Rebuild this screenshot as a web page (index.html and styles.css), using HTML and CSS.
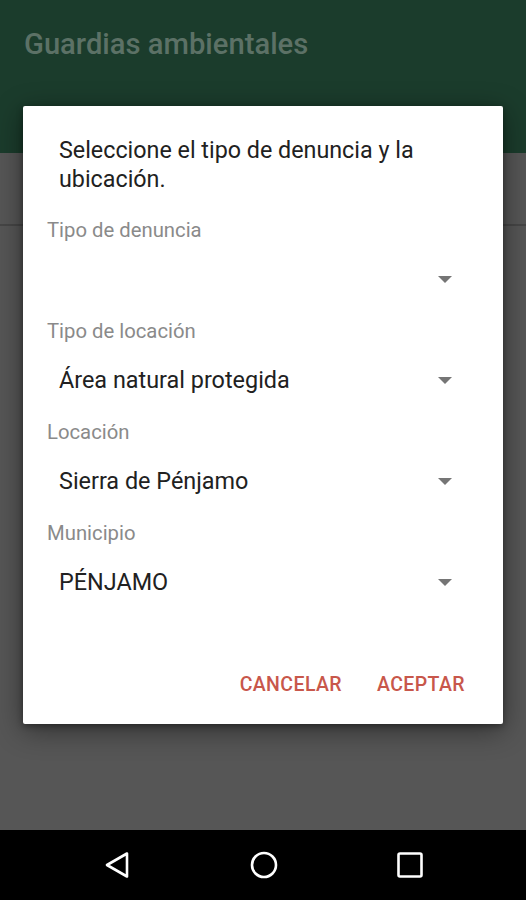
FILE: index.html
```html
<!DOCTYPE html>
<html lang="es">
<head>
<meta charset="utf-8">
<title>Guardias ambientales</title>
<link rel="stylesheet" href="styles.css">
</head>
<body>
<div class="screen">
  <header class="appbar"><h1 class="app-title">Guardias ambientales</h1></header>
  <main class="content"><div class="under-divider"></div></main>
  <nav class="navbar">
    <svg class="nav-icon" width="26" height="28" viewBox="0 0 26 28"><path d="M23 2.5 L3 14 L23 25.5 Z" fill="none" stroke="#fff" stroke-width="2.6" stroke-linejoin="round"/></svg>
    <svg class="nav-icon" width="28" height="28" viewBox="0 0 28 28"><circle cx="14" cy="14" r="12" fill="none" stroke="#fff" stroke-width="2.6"/></svg>
    <svg class="nav-icon" width="26" height="26" viewBox="0 0 26 26"><rect x="1.5" y="1.5" width="23" height="23" rx="1.5" fill="none" stroke="#fff" stroke-width="2.6"/></svg>
  </nav>
</div>
<div class="dialog">
  <p class="message">Seleccione el tipo de denuncia y la ubicación.</p>
  <div class="field">
    <div class="label">Tipo de denuncia</div>
    <div class="spinner"><span class="value"></span><span class="arrow"></span></div>
  </div>
  <div class="field">
    <div class="label">Tipo de locación</div>
    <div class="spinner"><span class="value">Área natural protegida</span><span class="arrow"></span></div>
  </div>
  <div class="field">
    <div class="label">Locación</div>
    <div class="spinner"><span class="value">Sierra de Pénjamo</span><span class="arrow"></span></div>
  </div>
  <div class="field">
    <div class="label">Municipio</div>
    <div class="spinner"><span class="value">PÉNJAMO</span><span class="arrow"></span></div>
  </div>
  <div class="actions">
    <button class="btn">CANCELAR</button>
    <button class="btn">ACEPTAR</button>
  </div>
</div>
</body>
</html>
```
FILE: styles.css
```css
html, body {
  margin: 0;
  padding: 0;
}
body {
  width: 526px;
  height: 900px;
  overflow: hidden;
  font-family: Roboto, "Noto Sans", sans-serif;
  position: relative;
}
.screen {
  display: flex;
  flex-direction: column;
  height: 900px;
}
.appbar {
  height: 153px;
  background: #1b3c2c;
  box-sizing: border-box;
  padding: 27px 0 0 24px;
}
.app-title {
  margin: 0;
  font-size: 29.2px;
  font-weight: 500;
  line-height: 34px;
  color: #5c7166;
}
.content {
  flex: 1;
  background: #565656;
  padding-top: 71px;
}
.under-divider {
  height: 2px;
  background: #464646;
}
.navbar {
  height: 70px;
  background: #000;
  display: flex;
  align-items: center;
  justify-content: space-between;
  padding: 0 103px 0 104px;
}
.dialog {
  position: absolute;
  left: 23px;
  top: 106px;
  width: 480px;
  height: 618px;
  box-sizing: border-box;
  background: #fff;
  border-radius: 2px;
  box-shadow: 0 6px 28px rgba(0, 0, 0, 0.45), 0 2px 6px rgba(0, 0, 0, 0.35);
  padding: 30px 24px 22px 24px;
  display: flex;
  flex-direction: column;
}
.message {
  margin: 0 0 24px 0;
  padding: 0 30px 0 12px;
  font-size: 23.3px;
  line-height: 29px;
  color: #212121;
}
.field {
  display: flex;
  flex-direction: column;
  padding-bottom: 14px;
}
.label {
  font-size: 20.3px;
  line-height: 24px;
  color: #8a8a8a;
  margin-bottom: 11px;
}
.spinner {
  height: 52px;
  display: flex;
  align-items: center;
  justify-content: space-between;
  padding: 0 27px 0 12px;
}
.value {
  font-size: 23.4px;
  color: #212121;
}
.arrow {
  width: 0;
  height: 0;
  border-left: 7.5px solid transparent;
  border-right: 7.5px solid transparent;
  border-top: 7px solid #757575;
}
.actions {
  margin-top: auto;
  display: flex;
  justify-content: flex-end;
  gap: 35px;
  padding-right: 14px;
}
.btn {
  border: none;
  background: none;
  padding: 0;
  height: 36px;
  font-family: Roboto, "Noto Sans", sans-serif;
  font-size: 19.5px;
  font-weight: 500;
  letter-spacing: 0.4px;
  color: #c8574b;
}
```
